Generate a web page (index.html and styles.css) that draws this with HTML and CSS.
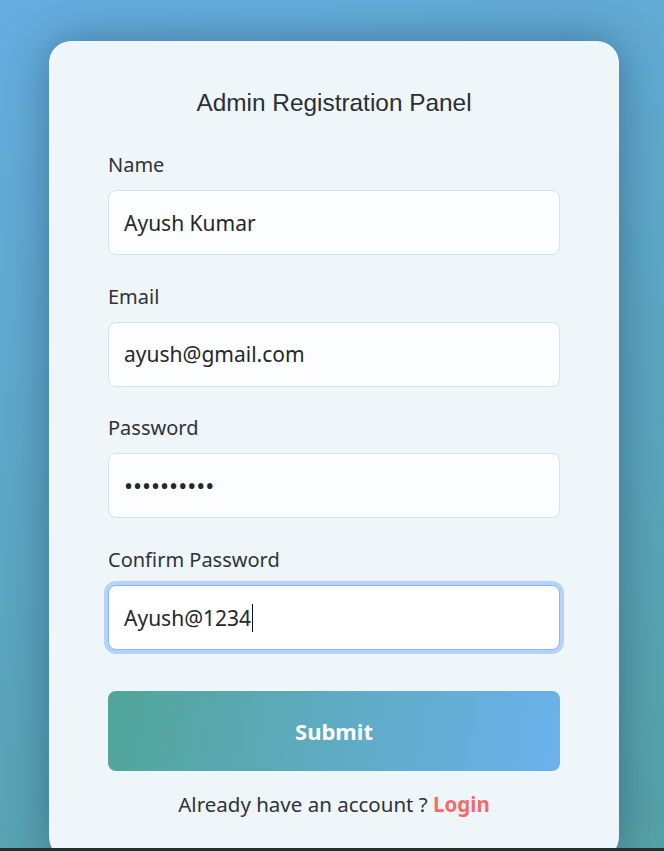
FILE: index.html
```html
<!DOCTYPE html>
<html>
<head>
<meta charset="utf-8">
<link rel="stylesheet" href="styles.css">
</head>
<body>
<div class="page">
  <div class="card">
    <h1 class="title">Admin Registration Panel</h1>
    <form class="form">
      <div class="field">
        <label class="label">Name</label>
        <div class="input">Ayush Kumar</div>
      </div>
      <div class="field">
        <label class="label">Email</label>
        <div class="input">ayush@gmail.com</div>
      </div>
      <div class="field">
        <label class="label">Password</label>
        <div class="input dots">••••••••••</div>
      </div>
      <div class="field">
        <label class="label">Confirm Password</label>
        <div class="input focus">Ayush@1234<span class="caret"></span></div>
      </div>
      <div class="submit">Submit</div>
      <p class="alt">Already have an account ? <a class="login">Login</a></p>
    </form>
  </div>
</div>
<div class="strip"></div>
</body>
</html>
```

FILE: styles.css
```css
html, body {
  margin: 0;
  padding: 0;
  background: #2b2b2b;
  overflow: hidden;
}
.page {
  height: 848px;
  background: linear-gradient(160deg, #66aee1 0%, #5ca7c4 50%, #57a1a6 100%);
  display: flex;
  justify-content: center;
  padding-top: 41px;
  padding-left: 4px;
  box-sizing: border-box;
  overflow: hidden;
}
.card {
  flex: none;
  width: 570px;
  height: 818px;
  box-sizing: border-box;
  background: #eff6f9;
  border-radius: 22px;
  box-shadow: 0 0 45px rgba(20, 50, 80, 0.45);
  padding: 48px 59px 0;
  font-family: "Noto Sans", "Open Sans", sans-serif;
  color: #2f3337;
}
.title {
  font-family: "Liberation Sans", Arial, sans-serif;
  font-weight: normal;
  font-size: 24.4px;
  line-height: 28px;
  margin: 0 0 35px;
  text-align: center;
  color: #2b2f33;
}
.form {
  display: flex;
  flex-direction: column;
}
.field {
  display: flex;
  flex-direction: column;
  gap: 12px;
  margin-bottom: 28.7px;
}
.label {
  font-size: 20px;
  line-height: 26px;
}
.input {
  height: 65px;
  box-sizing: border-box;
  border: 1px solid #dadfe4;
  border-radius: 8px;
  background: #fbfdff;
  padding: 0 15px;
  font-size: 21px;
  display: flex;
  align-items: center;
  color: #25282b;
}
.dots {
  font-size: 24px;
  letter-spacing: 0;
}
.focus {
  background: #ffffff;
  border-color: #86b7fe;
  box-shadow: 0 0 0 4px #b5d3f7;
}
.caret {
  display: inline-block;
  width: 1px;
  height: 28px;
  background: #111;
  margin-left: 1px;
}
.submit {
  margin-top: 12px;
  height: 80px;
  border-radius: 8px;
  background: linear-gradient(100deg, #51a598 0%, #5fabc2 50%, #6bb1ec 100%);
  color: #fff;
  font-weight: bold;
  font-size: 22px;
  display: flex;
  align-items: center;
  justify-content: center;
}
.alt {
  margin: 20px 0 0;
  text-align: center;
  font-size: 20.5px;
  line-height: 26px;
}
.login {
  color: #f46b6b;
  font-weight: bold;
}
.strip {
  height: 3px;
  background: #2b2b2b;
}
```
